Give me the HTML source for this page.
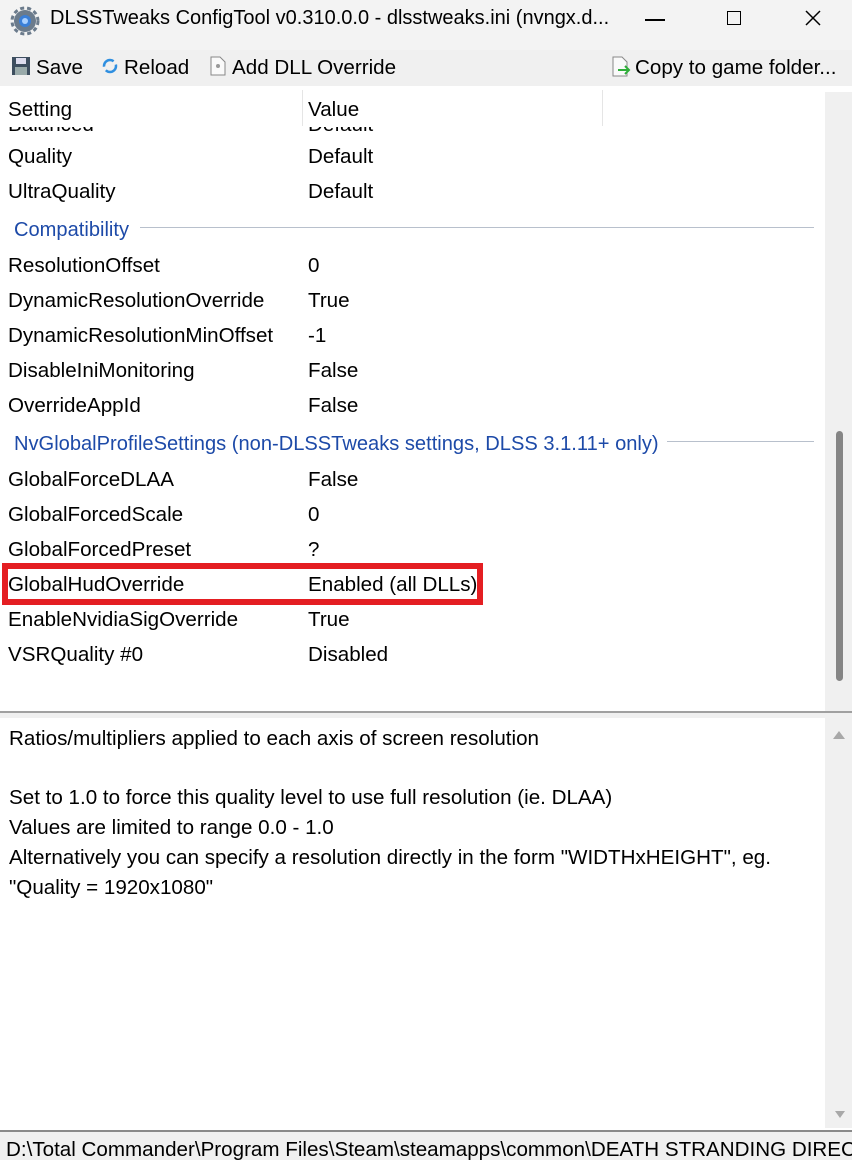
<!DOCTYPE html>
<html><head><style>
*{margin:0;padding:0;box-sizing:border-box}
body{width:852px;height:1160px;background:#fff;font-family:"Liberation Sans",sans-serif;position:relative;overflow:hidden;color:#000}
.a{position:absolute;white-space:nowrap;line-height:24px;font-size:20.6px}
.g{color:#1d4aa8;font-size:20.1px}
.ln{position:absolute;height:1px;background:#b8c0cc}
</style></head><body>
<div style="position:absolute;left:0;top:0;width:852px;height:50px;background:#f3f3f3"></div>
<svg style="position:absolute;left:10px;top:6px" width="30" height="30" viewBox="0 0 30 30"><circle cx="15" cy="15" r="11" fill="#6b7b8c"/><circle cx="15" cy="15" r="13" fill="none" stroke="#6b7b8c" stroke-width="3" stroke-dasharray="4 3"/><circle cx="15" cy="15" r="6" fill="#3a7fd8"/><circle cx="15" cy="15" r="3" fill="#aad0ff"/></svg>
<div class="a" style="left:50px;top:6px;font-size:20px">DLSSTweaks ConfigTool v0.310.0.0 - dlsstweaks.ini (nvngx.d...</div>
<div style="position:absolute;left:645px;top:19px;width:20px;height:1.5px;background:#000"></div>
<div style="position:absolute;left:727px;top:11px;width:14px;height:14px;border:1.5px solid #000"></div>
<svg style="position:absolute;left:805px;top:10px" width="16" height="16"><path d="M1 1L15 15M15 1L1 15" stroke="#000" stroke-width="1.5"/></svg>
<div style="position:absolute;left:0;top:50px;width:852px;height:36px;background:#f0f0f0"></div>
<svg style="position:absolute;left:12px;top:57px" width="18" height="18"><rect x="0" y="0" width="18" height="18" fill="#3d4e5f"/><rect x="4" y="1" width="10" height="6" fill="#dde"/><rect x="3" y="10" width="12" height="8" fill="#9aa"/></svg>
<div class="a" style="left:36px;top:56px">Save</div>
<svg style="position:absolute;left:101px;top:57px" width="18" height="18"><circle cx="9" cy="9" r="6" fill="none" stroke="#2f8fe0" stroke-width="2.5" stroke-dasharray="14 4"/></svg>
<div class="a" style="left:124px;top:56px">Reload</div>
<svg style="position:absolute;left:210px;top:56px" width="16" height="20"><path d="M1 1h9l5 5v13H1z" fill="#fafafa" stroke="#888"/><circle cx="8" cy="10" r="2" fill="#999"/></svg>
<div class="a" style="left:232px;top:56px">Add DLL Override</div>
<svg style="position:absolute;left:612px;top:56px" width="20" height="22"><path d="M1 1h9l5 5v14H1z" fill="#fafafa" stroke="#888"/><path d="M6 14h10M13 10l4 4-4 4" stroke="#2fae3a" stroke-width="2" fill="none"/></svg>
<div class="a" style="left:635px;top:56px">Copy to game folder...</div>
<!-- list -->
<div style="position:absolute;left:825px;top:92px;width:27px;height:620px;background:#f0f0f0"></div>
<div style="position:absolute;left:836px;top:431px;width:7px;height:250px;background:#858585;border-radius:4px"></div>
<div style="position:absolute;left:0;top:127px;width:820px;height:6px;overflow:hidden"><div class="a" style="left:8px;top:-14px">Balanced</div><div class="a" style="left:308px;top:-14px">Default</div></div>
<div style="position:absolute;left:0;top:90px;width:825px;height:37px;background:#fff"></div>
<div class="a" style="left:8px;top:98px">Setting</div>
<div class="a" style="left:308px;top:98px">Value</div>
<div style="position:absolute;left:302px;top:90px;width:1px;height:36px;background:#e5e5e5"></div>
<div style="position:absolute;left:602px;top:90px;width:1px;height:36px;background:#e5e5e5"></div>
<div class="a" style="left:8px;top:145px">Quality</div><div class="a" style="left:308px;top:145px">Default</div>
<div class="a" style="left:8px;top:180px">UltraQuality</div><div class="a" style="left:308px;top:180px">Default</div>
<div class="a g" style="left:14px;top:218px">Compatibility</div><div class="ln" style="left:140px;top:227px;width:674px"></div>
<div class="a" style="left:8px;top:254px">ResolutionOffset</div><div class="a" style="left:308px;top:254px">0</div>
<div class="a" style="left:8px;top:289px">DynamicResolutionOverride</div><div class="a" style="left:308px;top:289px">True</div>
<div class="a" style="left:8px;top:324px">DynamicResolutionMinOffset</div><div class="a" style="left:308px;top:324px">-1</div>
<div class="a" style="left:8px;top:359px">DisableIniMonitoring</div><div class="a" style="left:308px;top:359px">False</div>
<div class="a" style="left:8px;top:394px">OverrideAppId</div><div class="a" style="left:308px;top:394px">False</div>
<div class="a g" style="left:14px;top:432px">NvGlobalProfileSettings (non-DLSSTweaks settings, DLSS 3.1.11+ only)</div><div class="ln" style="left:667px;top:441px;width:147px"></div>
<div class="a" style="left:8px;top:468px">GlobalForceDLAA</div><div class="a" style="left:308px;top:468px">False</div>
<div class="a" style="left:8px;top:503px">GlobalForcedScale</div><div class="a" style="left:308px;top:503px">0</div>
<div class="a" style="left:8px;top:538px">GlobalForcedPreset</div><div class="a" style="left:308px;top:538px">?</div>
<div style="position:absolute;left:2px;top:563px;width:481px;height:42px;border:6px solid #e41e22"></div>
<div class="a" style="left:8px;top:573px">GlobalHudOverride</div><div class="a" style="left:308px;top:573px">Enabled (all DLLs)</div>
<div class="a" style="left:8px;top:608px">EnableNvidiaSigOverride</div><div class="a" style="left:308px;top:608px">True</div>
<div class="a" style="left:8px;top:643px">VSRQuality #0</div><div class="a" style="left:308px;top:643px">Disabled</div>
<!-- splitter -->
<div style="position:absolute;left:0;top:711px;width:852px;height:2px;background:#a0a0a0"></div>
<div style="position:absolute;left:0;top:713px;width:852px;height:5px;background:#f0f0f0"></div>
<div style="position:absolute;left:825px;top:718px;width:27px;height:410px;background:#f0f0f0"></div>
<div style="position:absolute;left:833px;top:731px;width:0;height:0;border-left:6px solid transparent;border-right:6px solid transparent;border-bottom:8px solid #a8a8a8"></div>
<div style="position:absolute;left:835px;top:1111px;width:0;height:0;border-left:5px solid transparent;border-right:5px solid transparent;border-top:7px solid #a8a8a8"></div>
<div class="a" style="left:9px;top:727px">Ratios/multipliers applied to each axis of screen resolution</div>
<div class="a" style="left:9px;top:786px">Set to 1.0 to force this quality level to use full resolution (ie. DLAA)</div>
<div class="a" style="left:9px;top:816px">Values are limited to range 0.0 - 1.0</div>
<div class="a" style="left:9px;top:846px">Alternatively you can specify a resolution directly in the form "WIDTHxHEIGHT", eg.</div>
<div class="a" style="left:9px;top:876px">"Quality = 1920x1080"</div>
<!-- status -->
<div style="position:absolute;left:0;top:1130px;width:852px;height:30px;background:#f0f0f0;border-top:2px solid #8a8a8a;overflow:hidden"><div class="a" style="left:6px;top:6px">D:\Total Commander\Program Files\Steam\steamapps\common\DEATH STRANDING DIREC</div></div>
</body></html>
